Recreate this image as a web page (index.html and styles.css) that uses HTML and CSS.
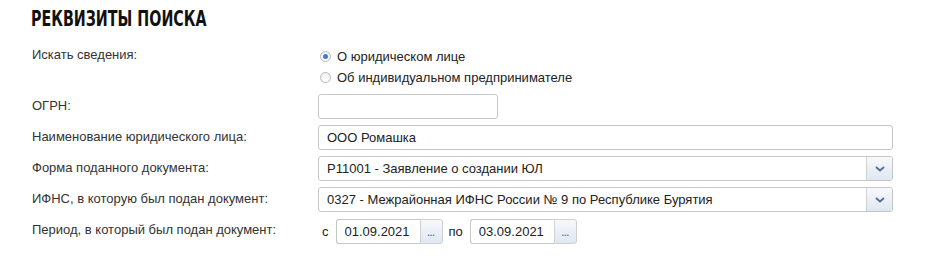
FILE: index.html
```html
<!DOCTYPE html>
<html lang="ru">
<head>
    <meta charset="UTF-8">
    <title>Реквизиты поиска</title>
    <link rel="stylesheet" href="styles.css">
</head>
<body>

    <h1 class="title">Реквизиты поиска</h1>

    <div class="search-form">
        <div class="label">Искать сведения:</div>
        <div class="radios">
            <label class="radio"><span class="radio-dot checked"></span>О юридическом лице</label>
            <label class="radio"><span class="radio-dot"></span>Об индивидуальном предпринимателе</label>
        </div>

        <div class="label pad">ОГРН:</div>
        <div><input class="field short" type="text"></div>

        <div class="label pad">Наименование юридического лица:</div>
        <div><input class="field" type="text" value="ООО Ромашка"></div>

        <div class="label pad">Форма поданного документа:</div>
        <div class="select">
            <span class="select-text">Р11001 - Заявление о создании ЮЛ</span>
            <span class="select-btn">
                <svg width="10" height="6" viewBox="0 0 10 6"><path d="M1 1l4 3.5L9 1" fill="none" stroke="#4f6f96" stroke-width="1.8"/></svg>
            </span>
        </div>

        <div class="label pad">ИФНС, в которую был подан документ:</div>
        <div class="select">
            <span class="select-text">0327 - Межрайонная ИФНС России № 9 по Республике Бурятия</span>
            <span class="select-btn">
                <svg width="10" height="6" viewBox="0 0 10 6"><path d="M1 1l4 3.5L9 1" fill="none" stroke="#4f6f96" stroke-width="1.8"/></svg>
            </span>
        </div>

        <div class="label pad">Период, в который был подан документ:</div>
        <div class="period">
            <span class="word">с</span>
            <div class="date">
                <input class="date-input" type="text" value="01.09.2021">
                <span class="date-btn">...</span>
            </div>
            <span class="word">по</span>
            <div class="date">
                <input class="date-input" type="text" value="03.09.2021">
                <span class="date-btn">...</span>
            </div>
        </div>
    </div>

</body>
</html>
```

FILE: styles.css
```css
body {
    margin: 0;
    font-family: "Liberation Sans", Arial, sans-serif;
    font-size: 13px;
    color: #333;
    background: #fff;
}

.title {
    margin: 6px 0 0 31px;
    font-family: "DejaVu Sans", sans-serif;
    font-size: 21px;
    line-height: 27px;
    font-weight: bold;
    text-transform: uppercase;
    color: #111;
    transform: scaleX(0.68);
    transform-origin: left center;
    white-space: nowrap;
}

.search-form {
    display: grid;
    grid-template-columns: 286px 575px;
    row-gap: 6px;
    margin: 14px 0 0 32px;
}

.label {
    line-height: 16px;
}

.label.pad {
    padding-top: 4px;
}

.radios {
    display: flex;
    flex-direction: column;
    margin-top: -1px;
}

.radio {
    display: flex;
    align-items: center;
    height: 21px;
    color: #222;
}

.radio-dot {
    width: 11px;
    height: 11px;
    margin: 0 6px 0 2px;
    border: 1px solid #b9b9b9;
    border-radius: 50%;
    background: linear-gradient(#f2f2f2, #fff);
    box-sizing: border-box;
    position: relative;
}

.radio-dot.checked::after {
    content: "";
    position: absolute;
    left: 2px;
    top: 2px;
    width: 5px;
    height: 5px;
    border-radius: 50%;
    background: #3f7fd0;
}

.field {
    display: block;
    width: 100%;
    height: 25px;
    padding: 0 8px;
    margin: 0;
    box-sizing: border-box;
    border: 1px solid #c6c6c6;
    border-radius: 3px;
    font-family: inherit;
    font-size: 13px;
    color: #222;
    outline: none;
}

.field.short {
    width: 180px;
}

.select {
    display: flex;
    height: 25px;
    box-sizing: border-box;
    border: 1px solid #c6c6c6;
    border-radius: 3px;
    overflow: hidden;
}

.select-text {
    flex: 1;
    padding-left: 8px;
    line-height: 23px;
    color: #222;
}

.select-btn {
    display: flex;
    align-items: center;
    justify-content: center;
    width: 25px;
    border-left: 1px solid #d0d0d0;
    background: linear-gradient(#f7f9fc, #dfe7f0);
}

.period {
    display: flex;
    align-items: center;
    height: 25px;
    margin-top: 1px;
}

.word {
    margin: 0 7px 0 4px;
    color: #222;
}

.date {
    display: flex;
    height: 25px;
    margin-right: 2px;
}

.date-input {
    width: 84px;
    height: 25px;
    padding: 0 8px;
    margin: 0;
    box-sizing: border-box;
    border: 1px solid #c6c6c6;
    border-right: none;
    border-radius: 3px 0 0 3px;
    font-family: inherit;
    font-size: 13px;
    color: #222;
    outline: none;
}

.date-btn {
    width: 23px;
    height: 25px;
    box-sizing: border-box;
    border: 1px solid #d0d0d0;
    border-radius: 0 3px 3px 0;
    background: linear-gradient(#f7f9fc, #dfe7f0);
    color: #4a78b0;
    font-size: 9px;
    font-weight: bold;
    text-align: center;
    line-height: 26px;
}
```
